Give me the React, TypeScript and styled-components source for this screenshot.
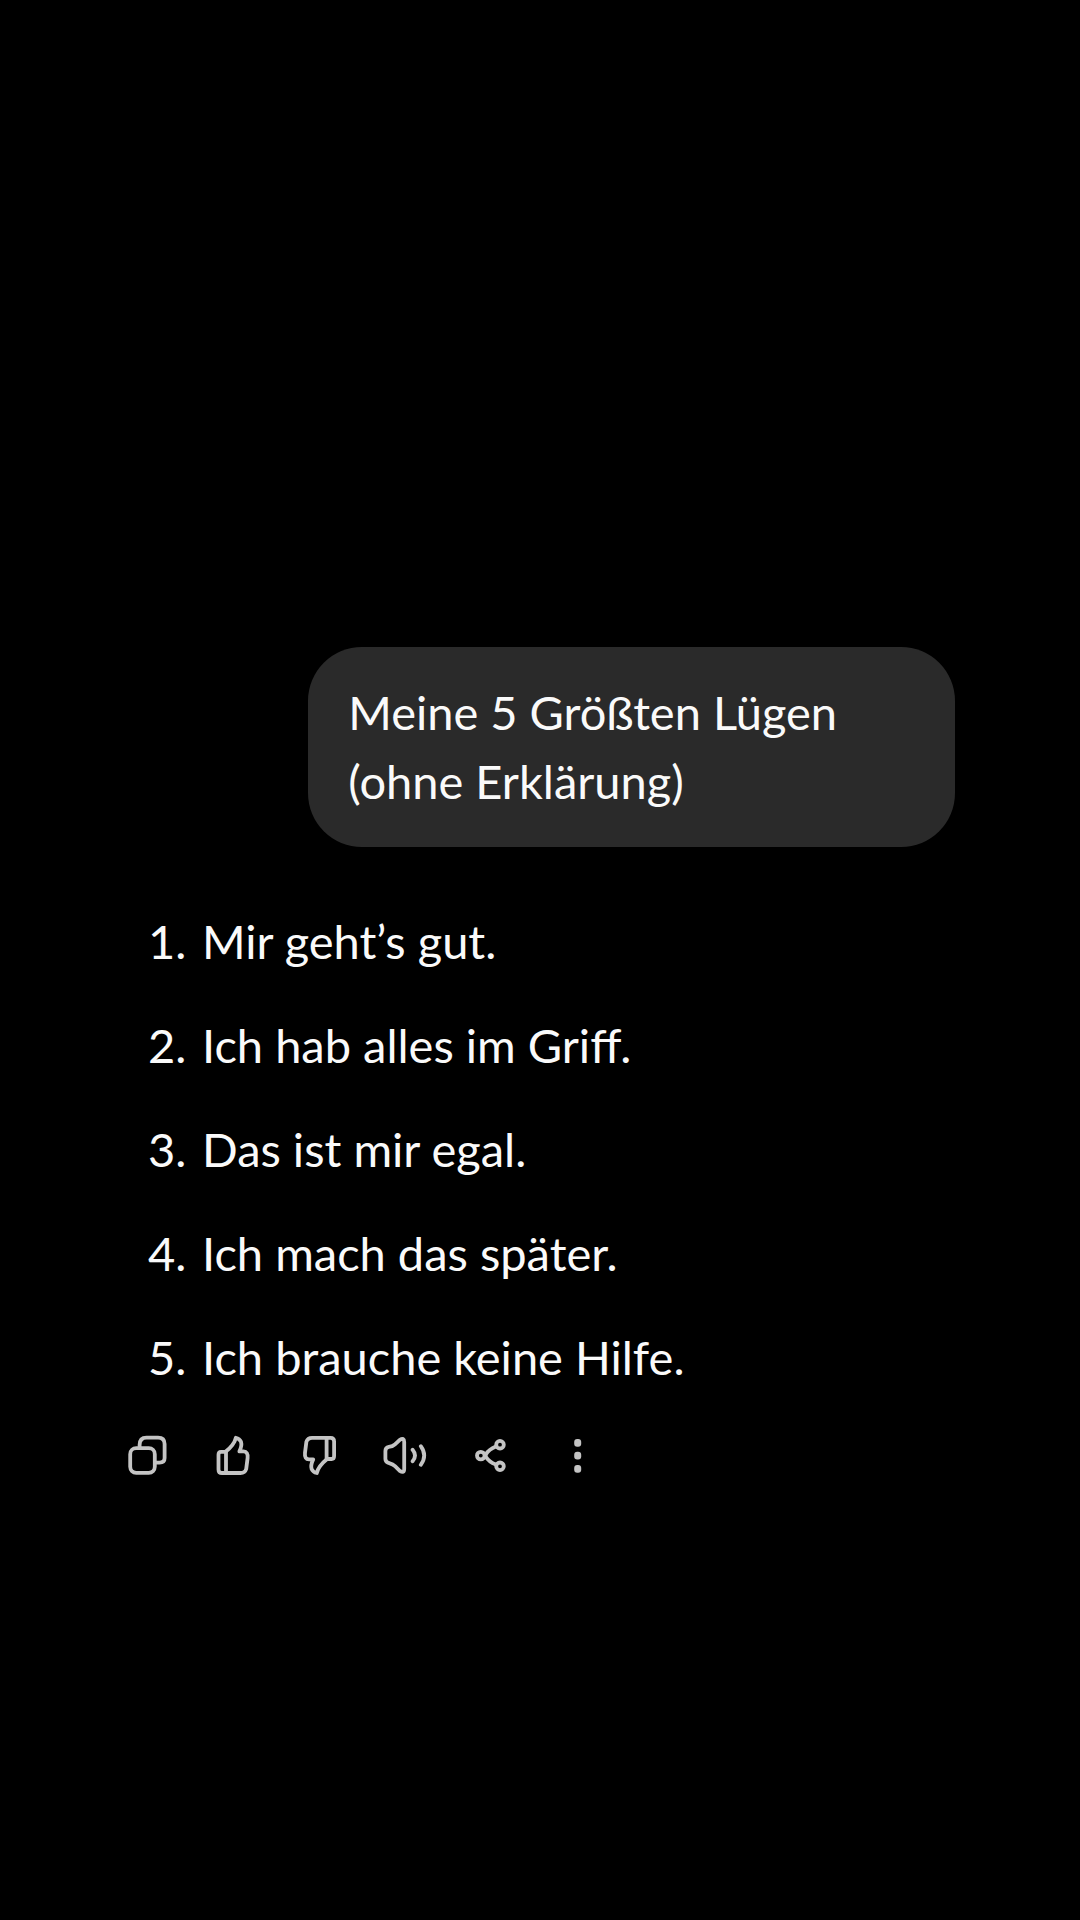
import React from "react";
import styled, { createGlobalStyle } from "styled-components";

const GlobalStyle = createGlobalStyle`
  * { box-sizing: border-box; }
  html { background: #000; }
  body { margin: 0; background: #000; }
`;

const Chat = styled.main`
  display: flex;
  flex-direction: column;
  min-height: 100vh;
  padding: 647px 125px 80px 104px;
  background: #000;
  color: #fafafa;
  font-family: Lato, "Noto Sans", sans-serif;
  font-size: 47px;
  line-height: 69px;
`;

const UserMessage = styled.p`
  align-self: flex-end;
  width: 76%;
  margin: 0;
  padding: 31px 40px;
  border-radius: 54px;
  background: #2a2a2a;
`;

const Answer = styled.ol`
  display: flex;
  flex-direction: column;
  gap: 35px;
  margin: 60px 0 0;
  padding: 0 0 0 44px;
  list-style: none;
`;

const AnswerItem = styled.li`
  display: flex;
`;

const ItemNumber = styled.span`
  flex: none;
  width: 54px;
`;

const Toolbar = styled.div`
  display: flex;
  margin-top: 40px;
`;

const IconButton = styled.button`
  display: flex;
  justify-content: center;
  width: 86px;
  padding: 0;
  border: 0;
  background: none;
  color: #c4c4c4;
  cursor: pointer;
`;

const Icon = styled.svg`
  width: 48px;
  height: 48px;
  fill: none;
  stroke: currentColor;
  stroke-width: 3.8;
  stroke-linecap: round;
  stroke-linejoin: round;
`;

const thumb = (
  <>
    <path d="M16.5 19.8H12Q9.5 19.8 9.5 22.8V37.4Q9.5 41 13 41H31.5Q36 41 37.2 37L38.6 26Q39.3 19.6 34.5 19.4H30.4Q33.2 13.5 32 9.8Q30.6 6.6 26.8 5.8Q25.4 12.6 16.5 19.8Z" />
    <path d="M17 19.8V41" />
  </>
);

const actions: { label: string; drawing: React.ReactNode }[] = [
  {
    label: "Kopieren",
    drawing: (
      <>
        <rect x="7.2" y="16.2" width="24.6" height="24.6" rx="6" />
        <path d="M16.6 15V13Q16.6 5.6 23.5 5.6H35Q41.6 5.6 41.6 12V26Q41.6 30.6 36.5 30.6H33" />
      </>
    ),
  },
  { label: "Gute Antwort", drawing: thumb },
  { label: "Schlechte Antwort", drawing: <g transform="rotate(180 24.3 23.4)">{thumb}</g> },
  {
    label: "Vorlesen",
    drawing: (
      <>
        <path d="M4.4 19Q4.4 15.4 7.8 14.8Q11.8 14.6 14 12.4L18.8 7.9Q23.2 5.2 23.2 10V37Q23.2 41.6 18.8 38.8L14 34.2Q11.8 32.2 8.8 31.4Q4.4 30.4 4.4 27Z" />
        <path d="M31.6 17.8Q36.4 23.6 31.6 29.2M39.8 14.2Q46.6 23.6 39.8 32.8" />
      </>
    ),
  },
  {
    label: "Teilen",
    drawing: (
      <>
        <circle cx="13.8" cy="23.6" r="3.8" />
        <circle cx="33" cy="12.7" r="3.8" />
        <circle cx="33" cy="34.3" r="3.8" />
        <path d="M28.8 14.6Q22 17.4 18.8 22.4V24.8Q22 30 28.8 32.6" />
      </>
    ),
  },
  {
    label: "Mehr",
    drawing: (
      <g fill="currentColor" stroke="none">
        <rect x="21.2" y="7" width="7" height="7.8" rx="3" />
        <rect x="21.2" y="19.8" width="7" height="7.8" rx="3" />
        <rect x="21.2" y="33" width="7" height="7.8" rx="3" />
      </g>
    ),
  },
];

const answers = [
  "Mir geht’s gut.",
  "Ich hab alles im Griff.",
  "Das ist mir egal.",
  "Ich mach das später.",
  "Ich brauche keine Hilfe.",
];

export default function App() {
  return (
    <>
      <GlobalStyle />
      <Chat>
        <UserMessage>
          Meine 5 Größten Lügen
          <br />
          (ohne Erklärung)
        </UserMessage>
        <Answer>
          {answers.map((text, i) => (
            <AnswerItem key={text}>
              <ItemNumber>{i + 1}.</ItemNumber>
              <span>{text}</span>
            </AnswerItem>
          ))}
        </Answer>
        <Toolbar>
          {actions.map(({ label, drawing }) => (
            <IconButton key={label} type="button" aria-label={label}>
              <Icon viewBox="0 0 48 48" aria-hidden="true">
                {drawing}
              </Icon>
            </IconButton>
          ))}
        </Toolbar>
      </Chat>
    </>
  );
}
